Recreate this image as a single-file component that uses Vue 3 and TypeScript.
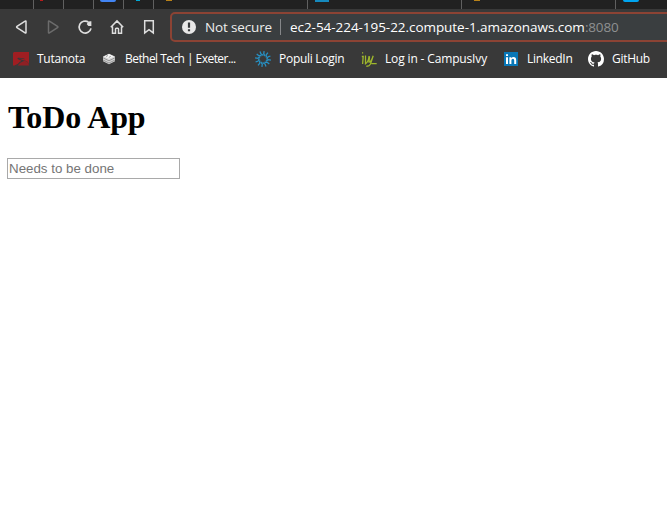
<script setup lang="ts">
interface Tab { width: number; mark: string }
interface Bookmark { id: string; label: string }

const tabs: Tab[] = [
  { width: 34, mark: 'none' },
  { width: 30, mark: 'red' },
  { width: 30, mark: 'none' },
  { width: 30, mark: 'blue' },
  { width: 30, mark: 'cyan' },
  { width: 154, mark: 'gold' },
  { width: 154, mark: 'linkedin-tab' },
  { width: 154, mark: 'gold tail' },
  { width: 52, mark: 'sky' },
]

const bookmarks: Bookmark[] = [
  { id: 'tutanota', label: 'Tutanota' },
  { id: 'bethel', label: 'Bethel Tech | Exeter...' },
  { id: 'populi', label: 'Populi Login' },
  { id: 'ivy', label: 'Log in - CampusIvy' },
  { id: 'linkedin', label: 'LinkedIn' },
  { id: 'github', label: 'GitHub' },
]

const rays: number[] = Array.from({ length: 12 }, (_, i) => i * 30 + 8)
</script>

<template>
  <div class="browser">
    <header class="chrome">
      <div class="tabs">
        <div v-for="(tab, i) in tabs" :key="i" class="tab" :style="{ width: tab.width + 'px' }">
          <i class="mark" :class="tab.mark"></i>
        </div>
      </div>
      <div class="toolbar">
        <nav class="nav">
          <svg viewBox="0 0 16 16"><path d="M13 2.6v10.8q0 1-.9.4L4 8.7q-.8-.7 0-1.4l8.1-5.1q.9-.6.9.4z" /></svg>
          <svg class="disabled" viewBox="0 0 16 16"><path d="M3.5 2.6v10.8q0 1 .9.4l8.1-5.1q.8-.7 0-1.4L4.4 2.2q-.9-.6-.9.4z" /></svg>
          <svg viewBox="0 0 16 16"><path d="M11.4 3A6 6 0 1 0 14 9.4" stroke-width="1.7" /><path d="M14.4 2.2v4.7h-3L9.8 5.2l.8-1.6 2-1.4z" class="solid" /></svg>
          <svg viewBox="0 0 16 16"><path d="M1.8 8.2 8 1.9l6.2 6.3M3.5 7.5v6.7h3V10q0-.8.8-.8h1.4q.8 0 .8.8v4.2h3V7.5" /></svg>
          <svg viewBox="0 0 16 16"><path d="M3.7 1.8h8.6v12.1L8 10.6l-4.3 3.3z" /></svg>
        </nav>
        <div class="address">
          <svg class="warn" viewBox="0 0 14 14"><circle cx="7" cy="7" r="7" fill="#e8e8e8" /><path d="M5.9 2.6h2.2v5.2H5.9zM5.9 9.2h2.2v2.1H5.9z" fill="#36393b" /></svg>
          <span class="security">Not secure</span>
          <span class="divider"></span>
          <span class="host">ec2-54-224-195-22.compute-1.amazonaws.com</span><span class="port">:8080</span>
        </div>
      </div>
      <div class="bookmarks">
        <div v-for="item in bookmarks" :key="item.id" class="bookmark" :class="item.id">
          <svg v-if="item.id === 'tutanota'" viewBox="0 0 16 16"><path d="M1 1h15v12.5q-1-3.8-5.5-4.3L5.8 7.6l6.2.7q-1.5-1.6-6.7-1.5-1.8.6.2 1.7l3 1.3q-2 .8-3.5 3L1.5 14.5H0V2z" fill="#a01e22" /><path d="M4.5 14.5q3-3.5 7-4.7 4 .8 4.5 4.7z" fill="#8f2024" /></svg>
          <svg v-else-if="item.id === 'bethel'" viewBox="0 0 16 16"><path d="m8 2.8 6 2.8v4.7l-6 3-6-3V5.6z" fill="#d5d5d5" /><path d="m8 3 5 2.4-5 2.4-5-2.4z" fill="#f5f5f5" /><path d="m2 6.8 6 3 6-3M2 9l6 3 6-3M5 5.5l2-1M7.8 6.4l2-1" fill="none" stroke="#777" stroke-width=".7" /></svg>
          <svg v-else-if="item.id === 'populi'" viewBox="0 0 16 16"><g stroke="#2791c4" stroke-width="1.3" fill="none"><path v-for="angle in rays" :key="angle" d="M8 0v3.2M8.2 3l1.6 1.8" :transform="`rotate(${angle} 8 8)`" /></g></svg>
          <svg v-else-if="item.id === 'ivy'" viewBox="0 0 16 16"><path d="M1 1.8h1.2M.8 5.5h1.4L1.6 13M4.5 4.5v8.3q3-2 3.6-7.8M8.5 5.5 8 11q2 .5 4.2-6.2L9.5 13q-1.3 2.5-4.2 2.2M10.5 12.6h5.2" fill="none" stroke="#9eb62c" stroke-width="1.3" /></svg>
          <svg v-else-if="item.id === 'linkedin'" viewBox="0 0 16 16"><rect x="1" y="1" width="14" height="14" fill="#0877b7" /><path d="M3 6.2h2V13H3zM3 3.2h2v1.9H3zM6.4 6.2h1.9v1q.8-1.2 2.2-1.2 2.7 0 2.7 3v4h-2V9.5q0-1.8-1.3-1.8-1.5 0-1.5 1.9V13h-2z" fill="#fff" /></svg>
          <svg v-else viewBox="0 0 16 16"><path fill="#fff" d="M8 0C3.58 0 0 3.58 0 8c0 3.54 2.29 6.53 5.47 7.59.4.07.55-.17.55-.38 0-.19-.01-.82-.01-1.49-2.01.37-2.53-.49-2.69-.94-.09-.23-.48-.94-.82-1.13-.28-.15-.68-.52-.01-.53.63-.01 1.08.58 1.23.82.72 1.21 1.87.87 2.33.66.07-.52.28-.87.51-1.07-1.78-.2-3.64-.89-3.64-3.95 0-.87.31-1.59.82-2.15-.08-.2-.36-1.02.08-2.12 0 0 .67-.21 2.2.82.64-.18 1.32-.27 2-.27s1.36.09 2 .27c1.53-1.04 2.2-.82 2.2-.82.44 1.1.16 1.92.08 2.12.51.56.82 1.27.82 2.15 0 3.07-1.87 3.75-3.65 3.95.29.25.54.73.54 1.48 0 1.07-.01 1.93-.01 2.2 0 .21.15.46.55.38A8.01 8.01 0 0 0 16 8c0-4.42-3.58-8-8-8z" /></svg>
          <span>{{ item.label }}</span>
        </div>
      </div>
    </header>
    <main class="page">
      <h1>ToDo App</h1>
      <input type="text" placeholder="Needs to be done" />
    </main>
  </div>
</template>

<style>
body { margin: 0; overflow: hidden; background: #fff; }
</style>

<style scoped>
.browser { width: 667px; height: 511px; overflow: hidden; background: #fff; }
.chrome { height: 78px; background: #393939; color: #fff; font-family: "Open Sans", "Noto Sans", sans-serif; }
.tabs { display: flex; height: 9px; background: #212121; overflow: hidden; }
.tab { box-sizing: border-box; flex: none; height: 9px; border-right: 1px solid #606060; }
.tab:last-child { border-right: 0; }
.mark { display: block; margin-left: 6px; width: 16px; height: 2px; }
.none { visibility: hidden; }
.red { width: 3px; height: 1px; background: #b71c1c; }
.blue { height: 2px; background: #4285f4; border-radius: 0 0 2px 2px; }
.cyan { width: 4px; height: 1px; margin-left: 12px; background: #00a9d6; }
.gold { width: 6px; height: 1px; margin-left: 12px; background: #b98218; }
.linkedin-tab { width: 14px; margin-left: 7px; background: #1689bd; }
.sky { margin-left: 7px; background: #00a4ef; border-radius: 0 0 2px 2px; }
.toolbar { display: flex; height: 36px; align-items: center; }
.nav { display: flex; flex: none; width: 157px; gap: 16px; padding-left: 13px; }
.nav svg { width: 16px; height: 16px; fill: none; stroke: #dedede; stroke-width: 1.5; }
.nav .disabled { stroke: #6c6c6c; }
.nav .solid { fill: #dedede; stroke: none; }
.address { box-sizing: border-box; display: flex; align-items: center; width: 510px; flex: none; height: 30px; padding-left: 10px; border: 2px solid #8c4334; border-radius: 5px; background: #3a3e40; font-size: 13.5px; line-height: 20px; white-space: nowrap; }
.warn { flex: none; width: 14px; height: 14px; margin-right: 9px; }
.security { width: 75px; flex: none; color: #ececec; letter-spacing: -.15px; }
.divider { width: 1px; height: 16px; flex: none; margin-right: 9px; background: #858789; }
.host { width: 295px; flex: none; letter-spacing: -.05px; }
.port { color: #8e9091; letter-spacing: -.2px; }
.bookmarks { display: grid; grid-template-columns: 88px 154px 106px 142px 85px 79px; height: 28px; padding-left: 13px; align-items: center; }
.bookmark { display: flex; align-items: center; gap: 8px; font-size: 12px; line-height: 16px; white-space: nowrap; letter-spacing: -.28px; }
.bookmark.bethel { letter-spacing: -.55px; }
.bookmark.ivy { letter-spacing: -.15px; }
.bookmark svg { width: 16px; height: 16px; flex: none; }
.page { padding: 21px 7px; }
h1 { margin: 0 0 22px 1px; font: bold 32px/37px "Liberation Serif", serif; letter-spacing: -.12px; color: #000; }
input { box-sizing: border-box; display: block; width: 173px; height: 21px; margin: 0; padding: 1px; border: 1px solid #a9a9a9; border-radius: 0; background: #fff; font: 13.333px "Liberation Sans", sans-serif; outline: none; }
input::placeholder { color: #757575; opacity: 1; }
</style>
